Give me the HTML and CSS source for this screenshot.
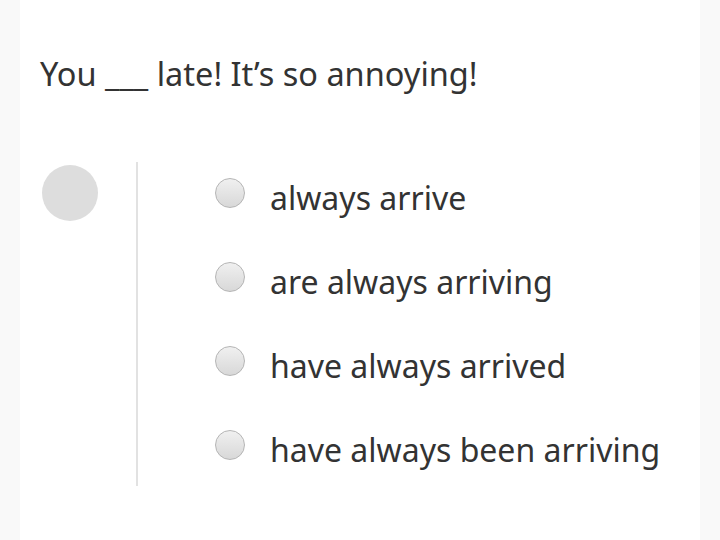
FILE: index.html
```html
<!DOCTYPE html>
<html>
<head>
<meta charset="utf-8">
<link rel="stylesheet" href="styles.css">
</head>
<body>
<div class="card">
  <p class="question">You ___ late! It’s so annoying!</p>
  <div class="answer">
    <div class="avatar-col"><div class="avatar"></div></div>
    <ul class="options">
      <li class="option"><span class="radio"></span><span class="label">always arrive</span></li>
      <li class="option"><span class="radio"></span><span class="label">are always arriving</span></li>
      <li class="option"><span class="radio"></span><span class="label">have always arrived</span></li>
      <li class="option"><span class="radio"></span><span class="label">have always been arriving</span></li>
    </ul>
  </div>
</div>
</body>
</html>
```
FILE: styles.css
```css
html, body {
  margin: 0;
  padding: 0;
  background: #f9f9f9;
}
body {
  font-family: "Noto Sans", "Open Sans", sans-serif;
  color: #333333;
}
.card {
  margin: 0 20px;
  height: 540px;
  background: #ffffff;
  padding: 54px 20px 0 20px;
  box-sizing: border-box;
}
.question {
  margin: 0;
  font-size: 32.5px;
  line-height: 40px;
}
.answer {
  display: flex;
  margin-top: 68px;
}
.avatar-col {
  width: 96px;
  flex: none;
}
.avatar {
  width: 56px;
  height: 56px;
  border-radius: 50%;
  background: #dddddd;
  margin: 3px 0 0 2px;
}
.options {
  list-style: none;
  margin: 0;
  padding: 0 0 10px 77px;
  border-left: 2px solid #e2e2e2;
  display: flex;
  flex-direction: column;
  gap: 22px;
}
.option {
  height: 62px;
  display: flex;
  align-items: center;
}
.radio {
  flex: none;
  width: 28px;
  height: 28px;
  border-radius: 50%;
  border: 1px solid #b5b5b5;
  background: linear-gradient(#f0f0f0, #d8d8d8);
  box-sizing: content-box;
  margin-right: 25px;
}
.label {
  font-size: 32px;
  line-height: 40px;
  position: relative;
  top: 5px;
}
```
